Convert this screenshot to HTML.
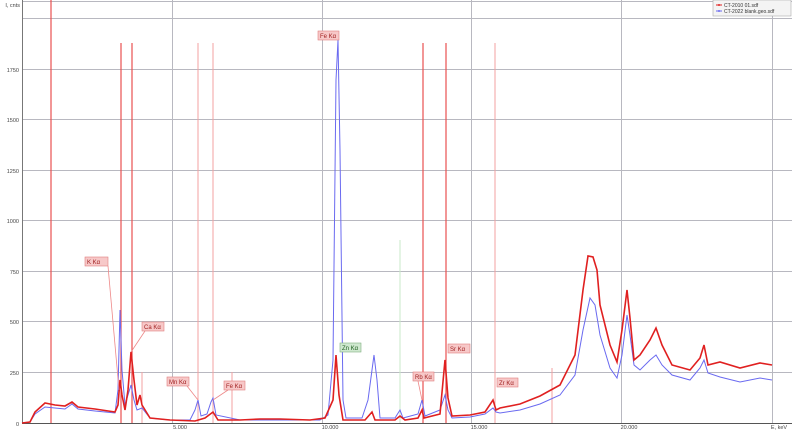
<!DOCTYPE html>
<html><head><meta charset="utf-8"><style>
html,body{margin:0;padding:0;background:#fff;width:792px;height:430px;overflow:hidden}
svg{display:block}
text{font-family:"Liberation Sans",sans-serif}
</style></head><body>
<svg width="792" height="430" viewBox="0 0 792 430" xmlns="http://www.w3.org/2000/svg">
<rect width="792" height="430" fill="#fff"/>
<!-- grid -->
<g stroke="#b8b8c0" stroke-width="1">
<line x1="22" y1="1.5" x2="792" y2="1.5"/>
<line x1="22" y1="18.5" x2="792" y2="18.5"/>
<line x1="22" y1="69.5" x2="792" y2="69.5"/>
<line x1="22" y1="119.5" x2="792" y2="119.5"/>
<line x1="22" y1="170.5" x2="792" y2="170.5"/>
<line x1="22" y1="220.5" x2="792" y2="220.5"/>
<line x1="22" y1="271.5" x2="792" y2="271.5"/>
<line x1="22" y1="321.5" x2="792" y2="321.5"/>
<line x1="22" y1="372.5" x2="792" y2="372.5"/>
<line x1="172.5" y1="0" x2="172.5" y2="424"/>
<line x1="322.5" y1="0" x2="322.5" y2="424"/>
<line x1="471.5" y1="0" x2="471.5" y2="424"/>
<line x1="621.5" y1="0" x2="621.5" y2="424"/>
<line x1="772.5" y1="16" x2="772.5" y2="424"/>
</g>
<line x1="22.5" y1="0" x2="22.5" y2="424" stroke="#777"/>
<line x1="22" y1="423.5" x2="792" y2="423.5" stroke="#555"/>
<!-- marker lines -->
<g stroke="#e85050" stroke-width="1.2">
<line x1="51" y1="0" x2="51" y2="423"/>
<line x1="121" y1="43" x2="121" y2="423"/>
<line x1="132" y1="43" x2="132" y2="423"/>
<line x1="423" y1="43" x2="423" y2="423"/>
<line x1="446" y1="43" x2="446" y2="423"/>
</g>
<g stroke="#f3a0a0" stroke-width="1">
<line x1="198" y1="43" x2="198" y2="423"/>
<line x1="213" y1="43" x2="213" y2="423"/>
<line x1="495" y1="43" x2="495" y2="423"/>
<line x1="142" y1="372" x2="142" y2="423"/>
<line x1="232" y1="372" x2="232" y2="423"/>
<line x1="552" y1="368" x2="552" y2="423"/>
</g>
<line x1="400" y1="240" x2="400" y2="423" stroke="#c8e8c8"/>
<!-- blue spectrum -->
<polyline fill="none" stroke="#6a6af0" stroke-width="1" points="22,423 30,422 35,414 45,407 55,408 65,409 72,404 78,409 95,411 115,413 118,390 120,310 122,370 125,405 128,395 131,385 134,400 137,410 142,408 150,418 170,420 190,420 195,410 198,400 201,416 207,414 211,402 213,398 216,415 240,420 260,420 300,420 320,420 328,415 333,360 336,80 338,40 340,150 343,400 346,418 362,418 368,400 372,370 374,355 377,380 380,418 395,418 400,410 403,418 418,414 422,400 425,416 440,410 445,395 448,410 452,418 470,417 485,414 493,408 496,412 500,413 520,410 540,404 560,395 575,375 583,330 590,298 595,305 600,335 610,368 617,378 622,355 627,315 630,335 634,365 640,370 650,360 656,355 662,365 672,375 690,380 700,368 704,360 708,373 720,377 740,382 760,378 772,380"/>
<!-- red spectrum -->
<polyline fill="none" stroke="#e02020" stroke-width="1.6" points="22,423 30,422 35,412 45,403 55,405 65,406 72,402 78,407 95,409 115,412 118,405 120,380 122,395 125,410 128,390 131,352 134,380 137,405 140,395 142,405 150,418 170,420 195,421 205,418 213,412 218,420 240,420 260,419 280,419 310,420 325,418 333,400 336,355 339,395 343,420 365,420 372,412 375,420 395,420 400,416 405,420 418,418 422,410 424,418 440,414 445,360 448,398 452,416 470,415 485,412 493,400 496,410 500,408 520,404 540,396 560,385 575,355 583,290 588,256 593,257 597,270 600,305 610,345 617,362 622,330 627,290 630,318 634,360 640,355 650,340 656,328 662,345 672,365 690,370 700,358 704,345 708,365 720,362 740,368 760,363 772,365"/>
<!-- leader lines -->
<g stroke="#e88" stroke-width="0.8" fill="none">
<line x1="108" y1="266" x2="119" y2="390"/>
<line x1="145" y1="331" x2="131" y2="352"/>
<line x1="187" y1="386" x2="198" y2="400"/>
<line x1="228" y1="390" x2="213" y2="400"/>
<line x1="418" y1="381" x2="422" y2="400"/>
</g>
<!-- labels -->
<g font-size="6" fill="#a02020">
<rect x="85" y="257" width="23" height="9" fill="#f7c8c8" stroke="#e08080" stroke-width="0.6"/><text x="87" y="264">K Kα</text>
<rect x="142" y="322" width="22" height="9" fill="#f7c8c8" stroke="#e08080" stroke-width="0.6"/><text x="144" y="329">Ca Kα</text>
<rect x="167" y="377" width="22" height="9" fill="#f7c8c8" stroke="#e08080" stroke-width="0.6"/><text x="169" y="384">Mn Kα</text>
<rect x="224" y="381" width="21" height="9" fill="#f7c8c8" stroke="#e08080" stroke-width="0.6"/><text x="226" y="388">Fe Kα</text>
<rect x="318" y="31" width="21" height="9" fill="#f7c8c8" stroke="#e08080" stroke-width="0.6"/><text x="320" y="38">Fe Kα</text>
<rect x="340" y="343" width="21" height="9" fill="#cfe8cf" stroke="#80b080" stroke-width="0.6"/><text x="342" y="350" fill="#206020">Zn Kα</text>
<rect x="413" y="372" width="21" height="9" fill="#f7c8c8" stroke="#e08080" stroke-width="0.6"/><text x="415" y="379">Rb Kα</text>
<rect x="448" y="344" width="22" height="9" fill="#f7c8c8" stroke="#e08080" stroke-width="0.6"/><text x="450" y="351">Sr Kα</text>
<rect x="497" y="378" width="21" height="9" fill="#f7c8c8" stroke="#e08080" stroke-width="0.6"/><text x="499" y="385">Zr Kα</text>
</g>
<!-- axis labels -->
<g font-size="5.5" fill="#444" text-anchor="end">
<text x="20" y="7">I, cnts</text>
<text x="19" y="72">1750</text>
<text x="19" y="122">1500</text>
<text x="19" y="173">1250</text>
<text x="19" y="223">1000</text>
<text x="19" y="274">750</text>
<text x="19" y="324">500</text>
<text x="19" y="375">250</text>
<text x="19" y="426">0</text>
</g>
<g font-size="5.5" fill="#444" text-anchor="middle">
<text x="180" y="429">5.000</text>
<text x="330" y="429">10.000</text>
<text x="479" y="429">15.000</text>
<text x="629" y="429">20.000</text>
<text x="779" y="429">E, keV</text>
</g>
<!-- legend -->
<rect x="713" y="0" width="78" height="16" fill="#f4f4f4" stroke="#aaa" stroke-width="0.6"/>
<line x1="716" y1="5" x2="722" y2="5" stroke="#e02020"/><circle cx="719" cy="5" r="1" fill="#e02020"/>
<line x1="716" y1="11" x2="722" y2="11" stroke="#6a6af0"/><circle cx="719" cy="11" r="1" fill="#6a6af0"/>
<text x="724" y="7" font-size="5" fill="#333">CT-2010 01.sdf</text>
<text x="724" y="13" font-size="5" fill="#333">CT-2022 blank.geo.sdf</text>
</svg>
</body></html>
